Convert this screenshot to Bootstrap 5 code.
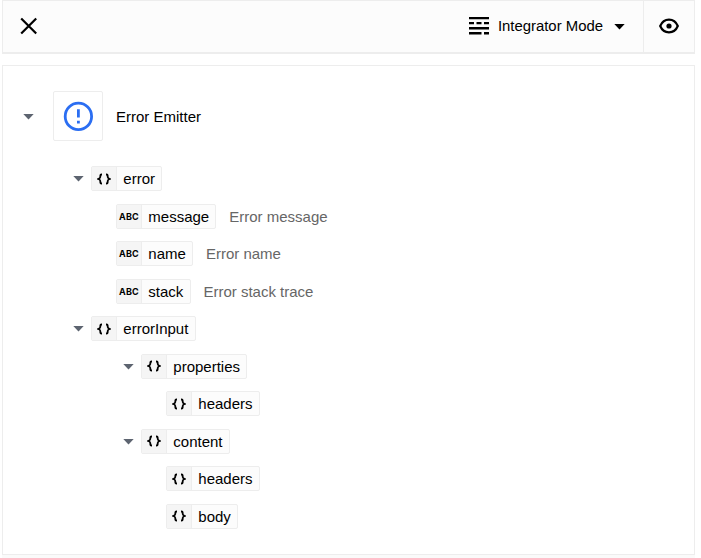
<!DOCTYPE html>
<html lang="en">
<head>
<meta charset="utf-8">
<meta name="viewport" content="width=device-width, initial-scale=1">
<title>Error Emitter</title>
<link href="https://cdn.jsdelivr.net/npm/bootstrap@5.3.0/dist/css/bootstrap.min.css" rel="stylesheet">
<style>
  body { font-family: "Liberation Sans", Arial, sans-serif; font-size: 15px; line-height: 23px; color: #000; background: #fff; height: 558px; overflow: hidden; }
  .shell { width: 693px; margin-left: 2px; height: 558px; }
  .topbar { height: 54px; background: #fcfcfc; border: 1px solid #ededed; border-bottom-width: 2px; }
  .plain { background: none; border: 0; padding: 0 0 1px; color: #000; }
  .close-btn { width: 51px; }
  .mode-btn { padding-right: 18px; }
  .mode-label { margin: 0 11px 0 8px; font-size: 14.900px; }
  .mode-btn .caret { fill: #000; }
  .eye-btn { width: 51px; border-left: 1px solid #ededed; }
  .panel { height: 490px; margin-top: 11px; border: 1px solid #ededed; padding-top: 25px; }
  .foot { height: 3px; background: #fafafa; }
  .root-row { height: 50px; padding-left: 20px; margin-bottom: 18.75px; }
  .app-tile { width: 50px; height: 50px; border: 1px solid #ededed; border-radius: 2px; margin: 0 13px 0 19px; }
  .caret { width: 11px; height: 7px; flex: none; fill: #5d6470; }
  .tree-row { height: 37.5px; }
  .tree-row .caret { margin-right: 7px; }
  .lvl-1 { padding-left: 70px; }
  .lvl-2 { padding-left: 113px; }
  .lvl-2c { padding-left: 120px; }
  .lvl-3 { padding-left: 163px; }
  .chip { height: 25px; border: 1px solid #ededed; border-radius: 2px; background: #fcfcfc; }
  .chip-type { width: 25px; background: #f5f5f5; border-right: 1px solid #ededed; }
  .chip-name { padding: 0 6.300px 0 6.300px; }
  .abc { font: 700 9px/24px "Inter", sans-serif; letter-spacing: .2px; }
  .note { margin-left: 12.800px; color: #666; }
</style>
<script src="https://cdn.jsdelivr.net/npm/bootstrap@5.3.0/dist/js/bootstrap.bundle.min.js"></script>
</head>
<body>
<svg class="d-none">
  <symbol id="caret" viewBox="0 0 11 7"><path d="M.3 1h10.400L5.500 6.500z"/></symbol>
  <symbol id="braces" viewBox="0 0 14 12"><path d="M5 1.500H4.600Q3.300 1.500 3.300 2.800v1.200Q3.300 5.200 1.300 6q2 .8 2 2v1.200Q3.300 10.500 4.600 10.500H5M9 1.500h.4q1.300 0 1.300 1.300v1.200q0 1.200 2 2-2 .8-2 2v1.200q0 1.300-1.300 1.300H9" fill="none" stroke="#000" stroke-width="1.800"/></symbol>
</svg>
<div class="shell">
  <header class="topbar d-flex align-items-stretch">
    <button class="plain close-btn d-flex align-items-center justify-content-center" aria-label="Close">
      <svg width="18" height="18" viewBox="0 0 18 18"><path d="M1.200 1.500l15 15M16.200 1.500l-15 15" stroke="#000" stroke-width="2.200"/></svg>
    </button>
    <button class="plain mode-btn d-flex align-items-center ms-auto">
      <svg width="21" height="18" viewBox="0 0 21 18"><path d="M0 0h20v2.300H0zM0 5h5v2.300H0zM7.500 5h5v2.300h-5zM15 5h5v2.300h-5zM0 10h20v2.500H0zM0 15h12.500v2.500H0zM15 15h5v2.500h-5z"/></svg>
      <span class="mode-label">Integrator Mode</span>
      <svg class="caret"><use href="#caret"/></svg>
    </button>
    <button class="plain eye-btn d-flex align-items-center justify-content-center" aria-label="Preview">
      <svg width="20" height="16" viewBox="0 0 20 16"><path d="M1.200 8C3 3.700 6.200 1.700 10 1.700S17 3.700 18.800 8C17 12.300 13.800 14.300 10 14.300S3 12.300 1.200 8z" fill="none" stroke="#000" stroke-width="2.200"/><circle cx="10" cy="8" r="2.600"/></svg>
    </button>
  </header>
  <main class="panel">
    <div class="root-row d-flex align-items-center">
      <svg class="caret"><use href="#caret"/></svg>
      <div class="app-tile d-flex align-items-center justify-content-center">
        <svg width="30" height="30" viewBox="0 0 30 30"><circle cx="15.400" cy="15.400" r="13.200" fill="none" stroke="#2b6ef2" stroke-width="2.800"/><path d="M14 8.200h2.800v8.400H14zM14 19.800h2.800v2.800H14z" fill="#2b6ef2"/></svg>
      </div>
      <span>Error Emitter</span>
    </div>
    <div class="tree-row lvl-1 d-flex align-items-center"><svg class="caret"><use href="#caret"/></svg><div class="chip d-flex"><span class="chip-type d-flex align-items-center justify-content-center"><svg width="14" height="12"><use href="#braces"/></svg></span><span class="chip-name">error</span></div></div>
    <div class="tree-row lvl-2 d-flex align-items-center"><div class="chip d-flex"><span class="chip-type abc text-center">ABC</span><span class="chip-name">message</span></div><span class="note">Error message</span></div>
    <div class="tree-row lvl-2 d-flex align-items-center"><div class="chip d-flex"><span class="chip-type abc text-center">ABC</span><span class="chip-name">name</span></div><span class="note">Error name</span></div>
    <div class="tree-row lvl-2 d-flex align-items-center"><div class="chip d-flex"><span class="chip-type abc text-center">ABC</span><span class="chip-name">stack</span></div><span class="note">Error stack trace</span></div>
    <div class="tree-row lvl-1 d-flex align-items-center"><svg class="caret"><use href="#caret"/></svg><div class="chip d-flex"><span class="chip-type d-flex align-items-center justify-content-center"><svg width="14" height="12"><use href="#braces"/></svg></span><span class="chip-name">errorInput</span></div></div>
    <div class="tree-row lvl-2c d-flex align-items-center"><svg class="caret"><use href="#caret"/></svg><div class="chip d-flex"><span class="chip-type d-flex align-items-center justify-content-center"><svg width="14" height="12"><use href="#braces"/></svg></span><span class="chip-name">properties</span></div></div>
    <div class="tree-row lvl-3 d-flex align-items-center"><div class="chip d-flex"><span class="chip-type d-flex align-items-center justify-content-center"><svg width="14" height="12"><use href="#braces"/></svg></span><span class="chip-name">headers</span></div></div>
    <div class="tree-row lvl-2c d-flex align-items-center"><svg class="caret"><use href="#caret"/></svg><div class="chip d-flex"><span class="chip-type d-flex align-items-center justify-content-center"><svg width="14" height="12"><use href="#braces"/></svg></span><span class="chip-name">content</span></div></div>
    <div class="tree-row lvl-3 d-flex align-items-center"><div class="chip d-flex"><span class="chip-type d-flex align-items-center justify-content-center"><svg width="14" height="12"><use href="#braces"/></svg></span><span class="chip-name">headers</span></div></div>
    <div class="tree-row lvl-3 d-flex align-items-center"><div class="chip d-flex"><span class="chip-type d-flex align-items-center justify-content-center"><svg width="14" height="12"><use href="#braces"/></svg></span><span class="chip-name">body</span></div></div>
  </main>
  <div class="foot"></div>
</div>
</body>
</html>
